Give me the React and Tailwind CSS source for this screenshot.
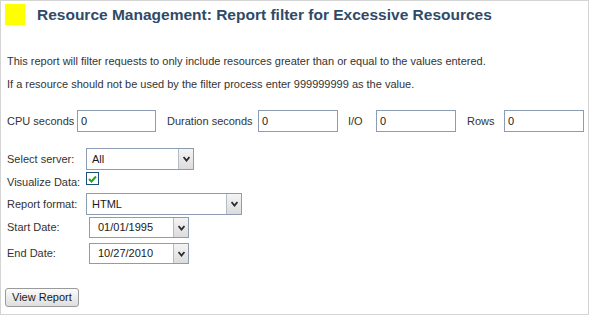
import React from "react";

const font = { fontFamily: '"Liberation Sans", Arial, sans-serif' };

function Chevron() {
  return (
    <div className="w-[15px] h-full border-l border-[#b5bcc7] bg-gradient-to-b from-[#f4f4f4] to-[#dcdcdc] flex items-center justify-center">
      <svg width="7" height="6" viewBox="0 0 7 6">
        <path d="M0.5 1 L3.5 4.5 L6.5 1" fill="none" stroke="#2a2a2a" strokeWidth="1.8" />
      </svg>
    </div>
  );
}

function Select({ w, value, pl = "pl-[5px]" }) {
  return (
    <div className={`h-full ${w} border border-[#8d9cb3] bg-white flex items-stretch`}>
      <div className={`flex-1 flex items-center ${pl} text-[11px] text-[#1a1a1a]`}>{value}</div>
      <Chevron />
    </div>
  );
}

function TextInput({ w }) {
  return (
    <div className={`${w} h-[22px] border border-[#8d9cb3] bg-white flex items-center pl-[3px] text-[11px] text-[#1a1a1a]`}>
      0
    </div>
  );
}

export default function App() {
  return (
    <div style={font} className="w-[589px] h-[315px] border border-[#d4d4d4] bg-white text-[11px] text-[#333] relative overflow-hidden">
      <div className="flex items-center pt-[3px] pl-[4px]">
        <div className="w-[20px] h-[21px] bg-[#ffff00]" />
        <div className="ml-[12px] text-[15.5px] font-bold text-[#2f4a68] leading-[20px]">
          Resource Management: Report filter for Excessive Resources
        </div>
      </div>
      <div className="pl-[6px] mt-[25px] leading-[23px]">
        <div>This report will filter requests to only include resources greater than or equal to the values entered.</div>
        <div>If a resource should not be used by the filter process enter 999999999 as the value.</div>
      </div>
      <div className="flex items-center pl-[6px] mt-[14px]">
        <span className="w-[70px]">CPU seconds</span>
        <TextInput w="w-[79px]" />
        <span className="ml-[11px] w-[91px]">Duration seconds</span>
        <TextInput w="w-[80px]" />
        <span className="ml-[10px] w-[28px]">I/O</span>
        <TextInput w="w-[80px]" />
        <span className="ml-[11px] w-[37px]">Rows</span>
        <TextInput w="w-[80px]" />
      </div>
      <div className="pl-[6px] mt-[16px]">
        <div className="flex items-center h-[22px]">
          <span className="w-[79px]">Select server:</span>
          <Select w="w-[108px]" value="All" />
        </div>
        <div className="flex h-[23px]">
          <span className="w-[79px] self-center pt-[1px]">Visualize Data:</span>
          <div className="mt-[2px] w-[13px] h-[13px] border border-[#1c4f7c] bg-white flex items-center justify-center">
            <svg width="9" height="8" viewBox="0 0 9 8">
              <path d="M1 4 L3.5 6.5 L8 1.5" fill="none" stroke="#23a323" strokeWidth="2" />
            </svg>
          </div>
        </div>
        <div className="flex items-center h-[22px]">
          <span className="w-[79px]">Report format:</span>
          <Select w="w-[156px]" value="HTML" />
        </div>
        <div className="flex items-center h-[21px] mt-[2px]">
          <span className="w-[82px]">Start Date:</span>
          <Select w="w-[100px]" value="01/01/1995" pl="pl-[8px]" />
        </div>
        <div className="flex items-center h-[21px] mt-[5px]">
          <span className="w-[82px]">End Date:</span>
          <Select w="w-[100px]" value="10/27/2010" pl="pl-[8px]" />
        </div>
      </div>
      <div className="pl-[4px] mt-[24px]">
        <button className="h-[19px] px-[6px] border border-[#9a9a9a] rounded-[3px] bg-gradient-to-b from-[#fbfbfb] to-[#dedede] text-[11px] text-[#1a1a1a] leading-none">
          View Report
        </button>
      </div>
    </div>
  );
}
